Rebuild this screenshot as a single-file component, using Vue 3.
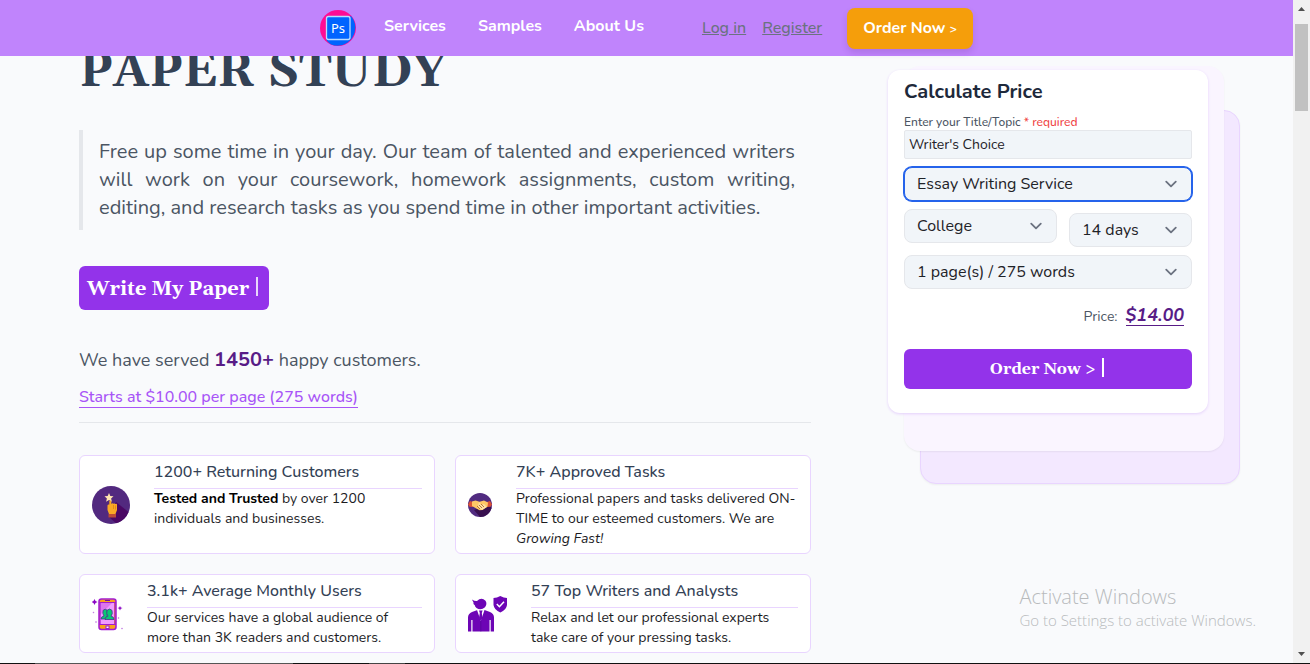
<script setup>
import { ref } from 'vue'

const topic = ref("Writer's Choice")
const service = ref('Essay Writing Service')
const level = ref('College')
const deadline = ref('14 days')
const pages = ref('1 page(s) / 275 words')
</script>

<template>
  <div class="screen">
    <div class="window">
      <div class="page">
        <header class="topbar">
          <a class="logo" href="#" aria-label="Paper Study home">
            <svg viewBox="0 0 36 36" width="36" height="36">
              <circle cx="18" cy="18" r="18" fill="#ff0c94" />
              <path d="M31 6A18 18 0 0 1 11 34.6Q6.500 31 6 29L29 7Z" fill="#0064ff" />
              <rect x="6.500" y="6.500" width="23.500" height="23" rx="2" fill="#0064ff" stroke="#b9dcff" stroke-width="1.300" />
              <text x="18" y="23" text-anchor="middle" class="logo-text">Ps</text>
            </svg>
          </a>
          <nav class="links">
            <a href="#">Services</a>
            <a href="#">Samples</a>
            <a href="#">About Us</a>
          </nav>
          <div class="account">
            <a href="#">Log in</a>
            <a href="#">Register</a>
          </div>
          <button class="cta" type="button">Order Now <small>&gt;</small></button>
        </header>

        <main class="content">
          <section class="intro">
            <h1>PAPER STUDY</h1>
            <blockquote>
              Free up some time in your day. Our team of talented and experienced writers will work on your
              coursework, homework assignments, custom writing, editing, and research tasks as you spend time in
              other important activities.
            </blockquote>
            <button class="write" type="button">Write My Paper <span class="caret"></span></button>
            <p class="served">We have served <strong>1450+</strong> happy customers.</p>
            <a class="starts" href="#">Starts at $10.00 per page (275 words)</a>
            <hr />
            <div class="stats">
              <article class="stat">
                <svg class="icon" viewBox="0 0 38 38" width="38" height="38">
                  <circle cx="19" cy="19" r="19" fill="#52297f" />
                  <path d="M24 16L36.500 26A19 19 0 0 1 24 37.300L17 31Z" fill="#4a0864" />
                  <path d="M17 7l1.300 3 3.200.2-2.400 2.200.8 3.300-2.900-1.700-2.900 1.700.8-3.300-2.400-2.200 3.200-.2z" fill="#ffe6b0" />
                  <path d="M17.300 15q1-1.200 2 0v3q1.200-1.200 2.200-.2 1.200-.8 2 .2 1.500-.5 1.500.8V24l-1.500 4H17l-1.500-4v-4.500q.3-1.500 1.800-1z" fill="#f9a825" />
                  <path d="M21.500 19v4M23.500 19.500v4" stroke="#db7e12" stroke-width=".7" />
                  <path d="M16.500 28h7.500v3.500h-7.500z" fill="#bd4b37" />
                </svg>
                <div class="info">
                  <h2>1200+ Returning Customers</h2>
                  <p><b>Tested and Trusted</b> by over 1200 individuals and businesses.</p>
                </div>
              </article>
              <article class="stat">
                <svg class="icon" viewBox="0 0 24 24" width="24" height="24">
                  <circle cx="12" cy="12" r="12" fill="#512b80" />
                  <path d="M21 12L23.500 15A12 12 0 0 1 12 24L6 17Z" fill="#38104f" />
                  <path d="M0 11.500L2 8l3 1v5l-3.500-.3zM24 11.500L22 8l-3 1v5l3.500-.3z" fill="#dc5236" />
                  <path d="M4 8.500l3.500-1 4 1.300 4.500-1.300 4 2-.5 4-5 3.500-3 .3L4 13z" fill="#ffc766" />
                  <path d="M11 9l2 3 3-1 3 3-5 3-4-3" fill="#ffe1a2" />
                  <path d="M9 13l3 3M11 12l3 3M13 11l3 3" stroke="#a45b2a" stroke-width=".8" />
                </svg>
                <div class="info">
                  <h2>7K+ Approved Tasks</h2>
                  <p>Professional papers and tasks delivered ON-TIME to our esteemed customers. We are <i>Growing Fast!</i></p>
                </div>
              </article>
              <article class="stat">
                <svg class="icon" viewBox="0 0 31 38" width="31" height="38">
                  <rect x="7" y="4" width="17" height="30.500" rx="2.500" fill="#f9a21a" stroke="#a21bd1" stroke-width="1.500" />
                  <path d="M8 8h14v21H8z" fill="#f19bff" />
                  <path d="M8 8h12L8 20z" fill="#dd75ed" />
                  <path d="M7 7.500h17M7 29.500h17M8 7v23M23 7v23" stroke="#a21bd1" stroke-width="1.200" />
                  <path d="M13 5.500h5" stroke="#7412a1" />
                  <path d="M9 24q0-2.500 3-3-2-2.500-.8-5.800 2-2 4 0v5.500l-1 3.300z" fill="#08c875" stroke="#49348e" stroke-width=".8" />
                  <path d="M13 24.500q0-3 3-3.300-2-2.500-1-5.800 2.500-2.800 5 0 1 3.300-1 5.800 3 .3 3 3.300z" fill="#08c875" stroke="#49348e" stroke-width=".8" />
                  <rect x="14" y="31" width="3" height="2.500" fill="#fff" stroke="#a21bd1" />
                  <path d="M2.500 4l1 2 2 1-2 1-1 2-1-2-2-1 2-1zM28 11l.8 1.500L30.500 13l-1.700.7L28 15.500l-.8-1.800-1.700-.7 1.700-.5z" fill="#8b08c5" />
                  <path d="M1 17h1v1H1zM3.500 26.500h1v1h-1zM26 22.500h1v1h-1zM29.500 33h1v1h-1z" fill="#a64bd5" stroke="#d09de9" stroke-width=".5" />
                </svg>
                <div class="info">
                  <h2>3.1k+ Average Monthly Users</h2>
                  <p>Our services have a global audience of more than 3K readers and customers.</p>
                </div>
              </article>
              <article class="stat">
                <svg class="icon" viewBox="0 0 39 38" width="39" height="38">
                  <path d="M4 4.500q3 2 5 1.500 4.500-4.500 8.500-.2 2 3-.5 6.500-4 3.500-8.500.8Q7 12 6.800 10.300 4.800 9 5.500 7.500z" fill="#6d05b5" />
                  <path d="M9.500 15L4 17Q0 18.500 0 22.500V36.500h3.300V25h1.200v11.500h17V25h1.200v11.500H26v-14q0-4-4-5.500l-5.500-2z" fill="#6d05b5" />
                  <path d="M9 15l3.800 11L16.500 15z" fill="#fff" />
                  <path d="M11 15.500h3.600l-.8 2.500.8 5-1.800 3-1.800-3 .8-5z" fill="#6d05b5" />
                  <path d="M12.800 26v10.500" stroke="#4d058b" stroke-width=".5" />
                  <path d="M32.300 1q3.500 2 6.700 2v7q-.6 5-6.700 7.500Q26.200 15 25.500 10V3q3.500 0 6.800-2z" fill="#6d05b5" />
                  <path d="M28.800 9l2.600 2.700 4.600-5" fill="none" stroke="#fff" stroke-width="1.500" />
                </svg>
                <div class="info">
                  <h2>57 Top Writers and Analysts</h2>
                  <p>Relax and let our professional experts take care of your pressing tasks.</p>
                </div>
              </article>
            </div>
          </section>

          <aside class="calculator">
            <form class="form" @submit.prevent>
              <h3>Calculate Price</h3>
              <label class="topic" for="topic">Enter your Title/Topic <em>* required</em></label>
              <input id="topic" v-model="topic" type="text" />
              <div class="field focused">
                <select v-model="service" aria-label="Service"><option>Essay Writing Service</option></select>
                <svg viewBox="0 0 20 20"><path d="M6 8l4 4 4-4" /></svg>
              </div>
              <div class="pair">
                <div class="field level">
                  <select v-model="level" aria-label="Academic level"><option>College</option></select>
                  <svg viewBox="0 0 20 20"><path d="M6 8l4 4 4-4" /></svg>
                </div>
                <div class="field days">
                  <select v-model="deadline" aria-label="Deadline"><option>14 days</option></select>
                  <svg viewBox="0 0 20 20"><path d="M6 8l4 4 4-4" /></svg>
                </div>
              </div>
              <div class="field">
                <select v-model="pages" aria-label="Length"><option>1 page(s) / 275 words</option></select>
                <svg viewBox="0 0 20 20"><path d="M6 8l4 4 4-4" /></svg>
              </div>
              <p class="price">Price: <output>$14.00</output></p>
              <button class="order" type="submit">Order Now &gt; <span class="caret"></span></button>
            </form>
          </aside>
        </main>
      </div>

      <div class="scrollbar" aria-hidden="true">
        <svg viewBox="0 0 17 17"><path d="M5 11h7L8.500 7z" /></svg>
        <div class="track"><div class="thumb"></div></div>
        <svg viewBox="0 0 17 17"><path d="M5 6h7L8.500 10z" /></svg>
      </div>
    </div>
    <div class="edge"></div>
    <div class="watermark">
      <strong>Activate Windows</strong>
      <span>Go to Settings to activate Windows.</span>
    </div>
  </div>
</template>

<style>
html, body { margin: 0; background: #f9fafc; }
</style>

<style scoped>
* { box-sizing: border-box; }
.screen {
  position: relative;
  display: flex;
  flex-direction: column;
  height: 100vh;
  overflow: hidden;
  background: #f9fafc;
  color: #4b5563;
  font-family: Nunito, Lato, sans-serif;
}
.window { display: flex; flex: 1; min-height: 0; }
.page { flex: 1; min-width: 0; overflow: hidden; }
button { border: 0; cursor: pointer; font-family: inherit; }

.topbar {
  position: relative;
  z-index: 2;
  display: flex;
  align-items: center;
  justify-content: center;
  height: 56px;
  background: #c084fc;
  font-size: 16px;
  line-height: 24px;
}
.logo { display: flex; margin-right: 28px; }
.logo-text { fill: #fff; font: 13px "Noto Sans", sans-serif; }
.links { display: flex; gap: 32px; padding-bottom: 4px; }
.links a { color: #fff; font-weight: 700; text-decoration: none; }
.account { display: flex; gap: 16px; margin: 0 25px 0 58px; }
.account a { color: #6b7280; font-weight: 500; text-decoration: underline; }
.cta {
  padding: 8px 16px;
  border-radius: 8px;
  background: #f59e0b;
  color: #fff;
  font-size: 16px;
  font-weight: 700;
  line-height: 24px;
  box-shadow: 0 4px 6px rgba(80, 40, 120, .16);
}
.cta small { font-size: 12px; }

.content {
  display: grid;
  grid-template-columns: minmax(0, 1fr) 320px;
  gap: 77px;
  align-items: start;
  padding: 0 85px 0 79px;
}
h1 {
  margin: -14px 0 28px;
  color: #334155;
  font: 700 48px/60px Gelasio, "Liberation Serif", serif;
}
blockquote {
  margin: 0 0 36px;
  padding: 8px 16px;
  border-left: 4px solid #e5e7eb;
  font-size: 20px;
  line-height: 28px;
  text-align: justify;
}
.write {
  display: flex;
  align-items: center;
  height: 44px;
  padding: 2px 8px 0;
  border-radius: 6px;
  background: #9333ea;
  color: #fff;
  font: 700 20px/28px Gelasio, "Liberation Serif", serif;
}
.caret { display: inline-block; width: 1px; height: 19px; margin-left: 8px; background: #fff; vertical-align: middle; }
.write .caret { margin: 0 3px 6px 7px; width: 2px; opacity: .8; }
.served { margin: 36px 0 14px; font-size: 18px; line-height: 28px; }
.served strong { color: #581c87; font-size: 20px; }
.starts {
  display: block;
  width: fit-content;
  border-bottom: 1px solid #a855f7;
  color: #a855f7;
  font-size: 16px;
  font-weight: 500;
  line-height: 19px;
  text-decoration: none;
}
hr { margin: 14px 0 32px; border: 0; border-top: 1px solid #e5e7eb; }
.stats { display: grid; grid-template-columns: repeat(2, minmax(0, 1fr)); gap: 20px; }
.stat {
  display: flex;
  align-items: center;
  gap: 24px;
  padding: 4px 12px;
  border: 1px solid #e9d5ff;
  border-radius: 6px;
  background: #fff;
}
.icon { flex: none; }
.info { flex: 1; min-width: 0; align-self: stretch; }
.info h2 {
  margin: 0;
  padding-bottom: 4px;
  border-bottom: 1px solid #e9d5ff;
  color: #334155;
  font-size: 16px;
  font-weight: 500;
  line-height: 24px;
}
.info p { margin: 0; color: #1c1c1f; font-size: 14px; line-height: 20px; }
.info b { color: #000; }

.calculator { position: relative; z-index: 0; margin-top: 14px; }
.calculator::before, .calculator::after { content: ""; position: absolute; z-index: -1; border-radius: 16px; }
.calculator::before {
  inset: 40px -32px -71px 32px;
  border: 1px solid #e9d5ff;
  background: #f3e8ff;
  box-shadow: 0 1px 2px rgba(0, 0, 0, .05);
}
.calculator::after {
  inset: -4px -16px -38px 16px;
  background: #faf5ff;
  box-shadow: 0 1px 2px rgba(0, 0, 0, .06);
}
.form {
  display: flex;
  flex-direction: column;
  padding: 8px 16px 24px;
  border-radius: 12px;
  background: #fff;
  box-shadow: 0 1px 3px #e4d0fb;
}
.form h3 { margin: 0 0 8px; color: #1e293b; font-size: 20px; font-weight: 700; line-height: 28px; }
.topic { font-size: 12px; font-weight: 500; line-height: 16px; }
.topic em { color: #ef4444; font-style: normal; }
input {
  width: 100%;
  height: 29px;
  margin-bottom: 8px;
  padding: 0 4px;
  border: 1px solid #e5e7eb;
  border-radius: 2px;
  background: #f1f5f9;
  color: #1f2328;
  font: 14px Nunito, Lato, sans-serif;
}
.field { position: relative; height: 34px; }
select {
  width: 100%;
  height: 100%;
  padding: 0 36px 0 12px;
  border: 1px solid #e5e7eb;
  border-radius: 8px;
  background: #f1f5f9;
  color: #1f2328;
  font: 16px Nunito, Lato, sans-serif;
  appearance: none;
}
.focused select { border-color: #2563eb; box-shadow: 0 0 0 1px #2563eb; }
.field svg {
  position: absolute;
  top: 5px;
  right: 9px;
  width: 24px;
  height: 24px;
  fill: none;
  stroke: #6b7280;
  stroke-width: 1.5;
  stroke-linecap: round;
  stroke-linejoin: round;
  pointer-events: none;
}
.pair { display: flex; gap: 12px; margin: 8px 0; }
.level { flex: 153; }
.days { flex: 123; margin-top: 4px; }
.price {
  display: flex;
  justify-content: flex-end;
  align-items: baseline;
  gap: 8px;
  margin: 14px 8px 18px 0;
  font-size: 14px;
  line-height: 28px;
}
.price output {
  border-bottom: 1px solid #581c87;
  color: #581c87;
  font-size: 18px;
  font-style: italic;
  font-weight: 700;
  line-height: 20px;
}
.order {
  height: 40px;
  border-radius: 6px;
  background: #9333ea;
  color: #fff;
  font: 700 16px/24px Gelasio, "Liberation Serif", serif;
}
.order .caret { width: 2px; margin: 0 2px 4px; }

.scrollbar { display: flex; flex-direction: column; width: 17px; background: #f1f1f1; }
.scrollbar svg { width: 17px; height: 17px; fill: #505050; }
.track { flex: 1; padding: 7px 2px 0; }
.thumb { height: 14%; background: #c1c1c1; }
.edge {
  height: 1px;
  background: linear-gradient(90deg, #111 35px, #555 35px 293px, #111 293px 369px, #444 369px 405px, #111 405px);
}
.watermark {
  position: absolute;
  right: 54px;
  bottom: 34px;
  display: flex;
  flex-direction: column;
  color: #b8babc;
  font-family: "Segoe UI", "Open Sans", sans-serif;
  pointer-events: none;
}
.watermark strong { font-size: 20px; font-weight: 300; line-height: 26px; }
.watermark span { font-size: 15px; font-weight: 300; line-height: 20px; }
</style>
